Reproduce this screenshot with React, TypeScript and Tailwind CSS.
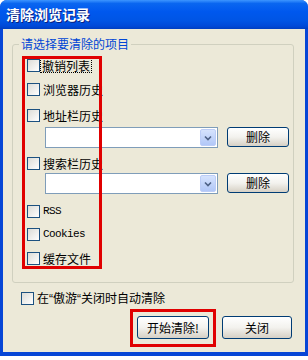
import React from "react";

const cjk = { fontFamily: '"Noto Sans CJK SC", "Noto Sans", sans-serif' };

const Check = () => (
    <span className="inline-block w-[13px] h-[13px] shrink-0 border border-[#1c5180] bg-gradient-to-br from-[#dcdcd7] to-white" />
);

const Row = ({ label, mt, mono, focus }: { label: string; mt: string; mono?: boolean; focus?: boolean }) => (
    <div className={`flex items-center h-[13px] pl-[14px] ${mt}`}>
        <Check />
        {focus ? (
            <span className="ml-[1px] px-[1px] leading-[13px] outline-1 outline-dotted outline-black text-[12px] text-black whitespace-nowrap">
                {label}
            </span>
        ) : (
            <span
                className={`ml-[3px] whitespace-nowrap text-black leading-[13px] ${mono ? "text-[11px] tracking-[-0.6px]" : "text-[12px]"}`}
                style={mono ? { fontFamily: '"Liberation Mono", monospace' } : undefined}
            >
                {label}
            </span>
        )}
    </div>
);

const XpButton = ({ children, className }: { children: React.ReactNode; className: string }) => (
    <button className={`${className} rounded-[3px] border border-[#003c74] bg-gradient-to-b from-white via-[#f3f2ee] to-[#d6d0c5] text-[12px] text-black leading-none`}>
        {children}
    </button>
);

const Combo = ({ mt }: { mt: string }) => (
    <div className={`flex items-start h-[21px] pl-[32px] ${mt}`}>
        <div className="w-[173px] h-[21px] border border-[#7f9db9] bg-white flex justify-end items-stretch p-[1px]">
            <div className="w-[16px] rounded-[2px] bg-gradient-to-b from-[#d6e3fd] to-[#b1c7f7] border border-[#bccdf7] flex items-center justify-center">
                <svg width="8" height="6" viewBox="0 0 8 6">
                    <path d="M1 1.5 L4 4.5 L7 1.5" stroke="#4d6185" strokeWidth="1.6" fill="none" />
                </svg>
            </div>
        </div>
        <XpButton className="ml-[9px] w-[62px] h-[20px]">删除</XpButton>
    </div>
);

export default function App() {
    return (
        <div className="w-[308px] h-[360px] bg-white" style={cjk}>
            <div className="h-[356px] flex flex-col rounded-t-[7px] bg-[#0746d6] overflow-hidden">
                {/* Title bar */}
                <div className="h-[29px] shrink-0 flex items-center pl-[6px] bg-[linear-gradient(to_bottom,#3d95ff_0%,#0a66f0_12%,#0058ee_40%,#0055e5_70%,#0049d8_90%,#003ec0_100%)]">
                    <span className="text-white font-bold text-[14px] [text-shadow:1px_1px_0_#0a1f80]">清除浏览记录</span>
                </div>

                {/* Body */}
                <div className="relative flex-1 mx-[3px] mb-[4px] bg-[#ece9d8] flex flex-col">
                    <div className="relative ml-[9px] mt-[15px] w-[282px] h-[239px] border border-[#d0d0bf] rounded-[3px] flex flex-col pt-[14px]">
                        <span className="absolute left-[6px] top-[-9px] px-[2px] bg-[#ece9d8] text-[12px] leading-[16px] text-[#0046d5]">
                            请选择要清除的项目
                        </span>
                        <Row label="撤销列表" mt="mt-0" focus />
                        <Row label="浏览器历史" mt="mt-[11px]" />
                        <Row label="地址栏历史" mt="mt-[13px]" />
                        <Combo mt="mt-[5px]" />
                        <Row label="搜索栏历史" mt="mt-[9px]" />
                        <Combo mt="mt-[3px]" />
                        <Row label="RSS" mt="mt-[11px]" mono />
                        <Row label="Cookies" mt="mt-[10px]" mono />
                        <Row label="缓存文件" mt="mt-[11px]" />
                    </div>

                    <div className="flex items-center h-[13px] pl-[18px] mt-[9px]">
                        <Check />
                        <span className="ml-[3px] text-[12px] leading-[13px] text-black whitespace-nowrap">
                            在<span style={{ fontFamily: '"Liberation Sans", sans-serif' }}>“</span>傲游<span style={{ fontFamily: '"Liberation Sans", sans-serif' }}>“</span>关闭时自动清除
                        </span>
                    </div>

                    <div className="flex justify-end gap-[13px] pr-[13px] mt-[11px]">
                        <XpButton className="w-[72px] h-[23px]">开始清除!</XpButton>
                        <XpButton className="w-[70px] h-[23px]">关闭</XpButton>
                    </div>

                    {/* red highlight marks */}
                    <div className="absolute left-[19px] top-[27px] w-[80px] h-[213px] border-[3px] border-[#e00000] pointer-events-none" />
                    <div className="absolute left-[127px] top-[280px] w-[86px] h-[38px] border-[3px] border-[#e00000] pointer-events-none" />
                </div>
            </div>
        </div>
    );
}
